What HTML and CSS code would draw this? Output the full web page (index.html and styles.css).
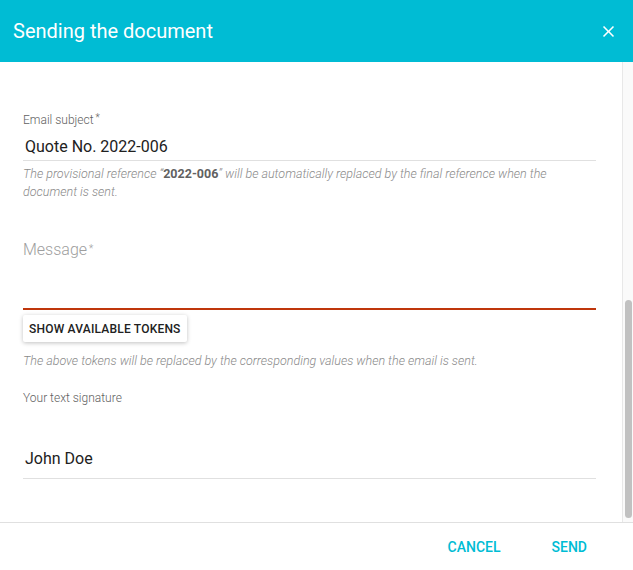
FILE: index.html
```html
<!DOCTYPE html>
<html lang="en">
<head>
  <meta charset="UTF-8">
  <meta name="viewport" content="width=device-width, initial-scale=1.0">
  <title>Sending the document</title>
  <link rel="stylesheet" href="styles.css">
</head>
<body>
  <div class="dialog">
    <header class="dialog-header">
      <h1>Sending the document</h1>
      <button class="close-btn" aria-label="Close">
        <svg width="19" height="19" viewBox="0 0 24 24"><path fill="#fff" d="M19 6.41L17.59 5 12 10.59 6.41 5 5 6.41 10.59 12 5 17.59 6.41 19 12 13.41 17.59 19 19 17.59 13.41 12z"/></svg>
      </button>
    </header>

    <div class="dialog-body">
      <div class="content">
        <div class="field">
          <label class="field-label">Email subject<span class="req">*</span></label>
          <div class="field-input">Quote No. 2022-006</div>
          <p class="helper">The provisional reference “<b>2022-006</b>” will be automatically replaced by the final reference when the document is sent.</p>
        </div>

        <div class="field message">
          <div class="placeholder">Message<span class="req">*</span></div>
          <div class="message-area"></div>
          <button class="tokens-btn">SHOW AVAILABLE TOKENS</button>
          <p class="helper">The above tokens will be replaced by the corresponding values when the email is sent.</p>
        </div>

        <div class="field signature">
          <label class="field-label">Your text signature</label>
          <div class="field-input">John Doe</div>
        </div>
      </div>
      <div class="scrollbar">
        <div class="thumb"></div>
      </div>
    </div>

    <footer class="dialog-footer">
      <button class="text-btn">CANCEL</button>
      <button class="text-btn">SEND</button>
    </footer>
  </div>
</body>
</html>
```

FILE: styles.css
```css
body {
  margin: 0;
  font-family: Roboto, "Liberation Sans", sans-serif;
  background: #fff;
  color: #212121;
}

.dialog {
  width: 633px;
  height: 570px;
  display: flex;
  flex-direction: column;
}

.dialog-header {
  height: 62px;
  flex-shrink: 0;
  background-color: #00bcd4;
  display: flex;
  align-items: center;
  justify-content: space-between;
  padding: 0 15px 0 13px;
}

.dialog-header h1 {
  margin: 0;
  font-size: 20px;
  font-weight: 400;
  color: #fff;
}

.close-btn {
  border: none;
  background: none;
  padding: 0;
  display: flex;
  cursor: pointer;
}

.dialog-body {
  flex: 1;
  display: flex;
  min-height: 0;
}

.content {
  flex: 1;
  padding: 49px 26px 0 23px;
}

.scrollbar {
  width: 10px;
  border-left: 1px solid #e8e8e8;
  background: #fafafa;
  display: flex;
  flex-direction: column;
  align-items: center;
}

.thumb {
  width: 7px;
  height: 218px;
  margin-top: 238px;
  border-radius: 4px;
  background: #c1c1c1;
}

.field-label {
  display: block;
  font-size: 12px;
  line-height: 14px;
  font-weight: 300;
  color: #616161;
}

.req {
  font-size: 10px;
  vertical-align: 3px;
  margin-left: 2px;
}

.field-input {
  margin-top: 10px;
  padding: 0 2px 3px;
  font-size: 16px;
  line-height: 20px;
  color: #212121;
  border-bottom: 1px solid #e0e0e0;
}

.helper {
  margin: 4px 0 0;
  font-size: 12.5px;
  line-height: 18px;
  font-style: italic;
  font-weight: 300;
  color: #8a8a8a;
}

.helper b {
  font-weight: 700;
  font-style: normal;
  color: #616161;
}

.message {
  margin-top: 38px;
}

.placeholder {
  font-size: 16px;
  line-height: 20px;
  font-weight: 300;
  color: #9e9e9e;
}

.message-area {
  height: 48px;
  border-bottom: 2px solid #bf360c;
}

.tokens-btn {
  margin-top: 5px;
  height: 27px;
  padding: 0 6px;
  border: none;
  border-radius: 2px;
  background: #fff;
  box-shadow: 0 1px 4px rgba(0, 0, 0, 0.25);
  font-family: inherit;
  font-size: 12px;
  font-weight: 500;
  letter-spacing: 0.2px;
  color: #212121;
}

.message .helper {
  margin-top: 10px;
}

.signature {
  margin-top: 21px;
}

.signature .field-input {
  margin-top: 44px;
  padding-bottom: 9px;
}

.dialog-footer {
  height: 47px;
  flex-shrink: 0;
  border-top: 1px solid #e0e0e0;
  display: flex;
  justify-content: flex-end;
  align-items: center;
  gap: 19px;
  padding: 0 30px 0 0;
}

.text-btn {
  border: none;
  background: none;
  padding: 8px 16px;
  font-family: inherit;
  font-size: 14px;
  font-weight: 500;
  color: #00bcd4;
  cursor: pointer;
}
```
